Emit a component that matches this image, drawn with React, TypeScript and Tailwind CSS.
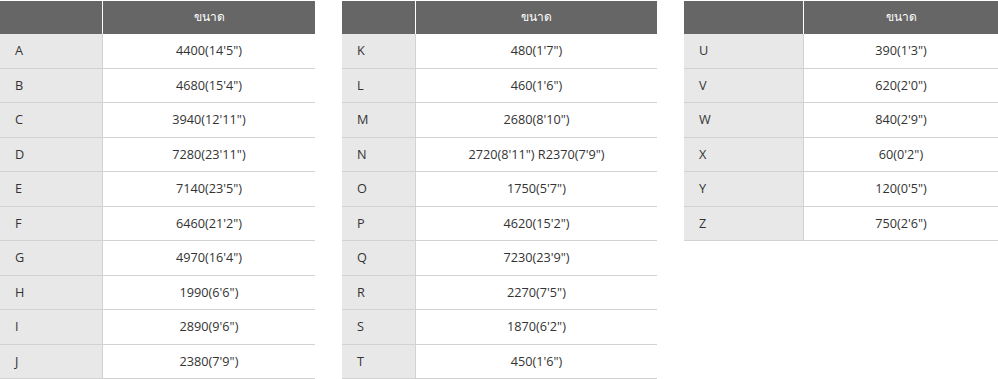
import React from "react";

type Row = [string, string];

const t1: Row[] = [
  ["A", "4400(14'5\")"],
  ["B", "4680(15'4\")"],
  ["C", "3940(12'11\")"],
  ["D", "7280(23'11\")"],
  ["E", "7140(23'5\")"],
  ["F", "6460(21'2\")"],
  ["G", "4970(16'4\")"],
  ["H", "1990(6'6\")"],
  ["I", "2890(9'6\")"],
  ["J", "2380(7'9\")"],
];
const t2: Row[] = [
  ["K", "480(1'7\")"],
  ["L", "460(1'6\")"],
  ["M", "2680(8'10\")"],
  ["N", "2720(8'11\") R2370(7'9\")"],
  ["O", "1750(5'7\")"],
  ["P", "4620(15'2\")"],
  ["Q", "7230(23'9\")"],
  ["R", "2270(7'5\")"],
  ["S", "1870(6'2\")"],
  ["T", "450(1'6\")"],
];
const t3: Row[] = [
  ["U", "390(1'3\")"],
  ["V", "620(2'0\")"],
  ["W", "840(2'9\")"],
  ["X", "60(0'2\")"],
  ["Y", "120(0'5\")"],
  ["Z", "750(2'6\")"],
];

function Table({ rows, width, left }: { rows: Row[]; width: string; left: string }) {
  return (
    <div className={`${width} shrink-0 pt-px`}>
      <div className="flex h-[33px] bg-[#666666]">
        <div className={`${left} shrink-0 border-r border-white`} />
        <div className="flex-1 flex items-center justify-center text-white text-[12px] pb-[2px]">
          ขนาด
        </div>
      </div>
      {rows.map(([k, v]) => (
        <div key={k} className="flex h-[34.5px] border-b border-[#d2d2d2]">
          <div className={`${left} shrink-0 bg-[#e8e8e8] border-r border-[#d2d2d2] flex items-center pl-[15px]`}>
            {k}
          </div>
          <div className="flex-1 flex items-center justify-center">{v}</div>
        </div>
      ))}
    </div>
  );
}

export default function App() {
  return (
    <div
      className="w-[998px] h-[379px] overflow-hidden bg-white flex gap-[27px] text-[12.7px] text-[#333333]"
      style={{ fontFamily: '"Open Sans", "Noto Sans", sans-serif' }}
    >
      <Table rows={t1} width="w-[315px]" left="w-[103px]" />
      <Table rows={t2} width="w-[315px]" left="w-[74px]" />
      <Table rows={t3} width="w-[314px]" left="w-[120px]" />
    </div>
  );
}
